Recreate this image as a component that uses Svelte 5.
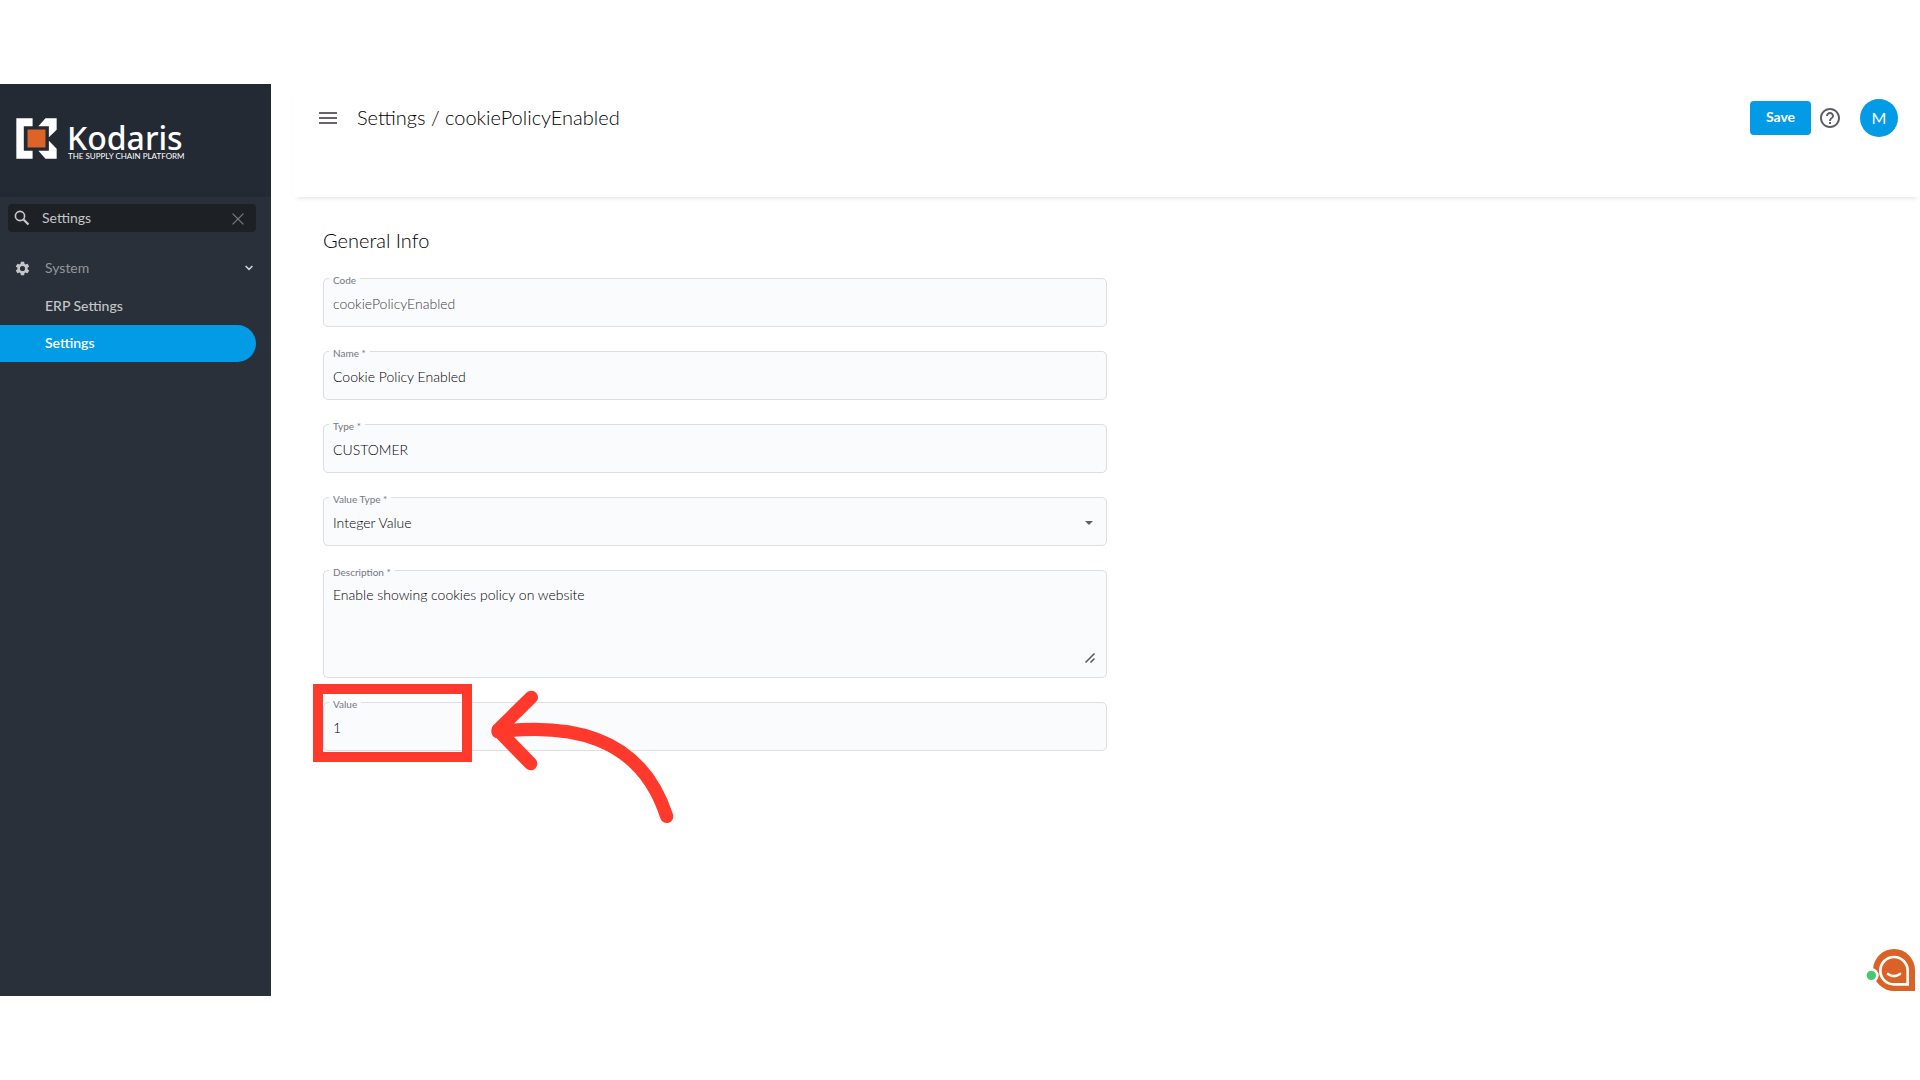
<script lang="ts">
  let search = $state('Settings');
  let menuOpen = $state(true);

  let setting = $state({
    code: 'cookiePolicyEnabled',
    name: 'Cookie Policy Enabled',
    type: 'CUSTOMER',
    valueType: 'Integer Value',
    description: 'Enable showing cookies policy on website',
    value: '1'
  });

  const valueTypes = ['Integer Value', 'String Value', 'Boolean Value'];
</script>

<div class="app">
  <aside class="sidebar">
    <a class="brand" href="#home">
      <svg class="mark" viewBox="50 144 121 121" aria-hidden="true">
        <path fill="#fff" d="M51 145h48v23H73v73h26v23H51zM137 145h33v34l-23 22v-33h-31zM116 241h31v-30l23 24v29h-33z" />
        <path fill="#dc6428" d="M84 178h53v53H84z" />
      </svg>
      <span class="brand-text">
        <span class="brand-name">Kodaris</span>
        <span class="tagline">THE SUPPLY CHAIN PLATFORM</span>
      </span>
    </a>

    <div class="search">
      <svg width="16" height="16" viewBox="0 0 16 16" fill="none" stroke="#c8c9cb" aria-hidden="true">
        <circle cx="6" cy="6" r="4.6" stroke-width="1.6" />
        <path d="M9.5 9.5l5 5" stroke-width="2.2" />
      </svg>
      <input type="text" aria-label="Search menu" bind:value={search} />
      <button class="clear" aria-label="Clear" onclick={() => (search = '')}>
        <svg width="12" height="12" viewBox="0 0 12 12" stroke="#777b81" stroke-width="1.3" aria-hidden="true">
          <path d="M.6.6l10.8 10.8M11.4.6L.6 11.4" />
        </svg>
      </button>
    </div>

    <nav>
      <button class="group" onclick={() => (menuOpen = !menuOpen)}>
        <svg width="17" height="17" viewBox="0 0 24 24" fill="#c4c6c8" aria-hidden="true">
          <path d="M19.14 12.94c.04-.3.06-.61.06-.94s-.02-.64-.07-.94l2.03-1.58a.49.49 0 0 0 .12-.61l-1.92-3.32a.49.49 0 0 0-.59-.22l-2.39.96a7 7 0 0 0-1.62-.94l-.36-2.54a.48.48 0 0 0-.48-.41h-3.84a.48.48 0 0 0-.47.41l-.36 2.54a7.4 7.4 0 0 0-1.62.94l-2.39-.96a.48.48 0 0 0-.59.22L2.74 8.87a.48.48 0 0 0 .12.61l2.03 1.58c-.05.3-.09.63-.09.94s.02.64.07.94l-2.03 1.58a.49.49 0 0 0-.12.61l1.92 3.32c.12.22.37.29.59.22l2.39-.96c.5.38 1.03.7 1.62.94l.36 2.54c.05.24.24.41.48.41h3.84c.24 0 .44-.17.47-.41l.36-2.54a7 7 0 0 0 1.62-.94l2.39.96c.22.08.47 0 .59-.22l1.92-3.32a.48.48 0 0 0-.12-.61zM12 15.6a3.6 3.6 0 1 1 0-7.2 3.6 3.6 0 0 1 0 7.2z" />
        </svg>
        <span>System</span>
        <svg class="chevron" width="8" height="6" viewBox="0 0 8 6" fill="none" stroke="#d4d5d7" stroke-width="1.5" aria-hidden="true">
          <path d="M.6 1L4 4.4 7.4 1" />
        </svg>
      </button>
      {#if menuOpen}
        <a class="item" href="#erp-settings">ERP Settings</a>
        <a class="item active" href="#settings">Settings</a>
      {/if}
    </nav>
  </aside>

  <main>
    <header>
      <button class="icon-button" aria-label="Toggle menu">
        <svg width="18" height="12" viewBox="0 0 18 12" fill="#67656b" aria-hidden="true">
          <path d="M0 0h18v2H0zM0 5h18v2H0zM0 10h18v2H0z" />
        </svg>
      </button>
      <h1>Settings / cookiePolicyEnabled</h1>
      <button class="save">Save</button>
      <button class="icon-button help" aria-label="Help">
        <svg width="20" height="20" viewBox="2 2 20 20" fill="#5f5d63" aria-hidden="true">
          <path d="M11 18h2v-2h-2v2zm1-16C6.48 2 2 6.48 2 12s4.48 10 10 10 10-4.48 10-10S17.52 2 12 2zm0 18c-4.41 0-8-3.59-8-8s3.59-8 8-8 8 3.59 8 8-3.59 8-8 8zm0-14c-2.21 0-4 1.79-4 4h2c0-1.1.9-2 2-2s2 .9 2 2c0 2-3 1.75-3 5h2c0-2.25 3-2.5 3-5 0-2.21-1.79-4-4-4z" />
        </svg>
      </button>
      <button class="avatar">M</button>
    </header>

    <form>
      <h2>General Info</h2>
      <div class="field">
        <label for="code">Code</label>
        <input id="code" type="text" value={setting.code} disabled />
      </div>
      <div class="field">
        <label for="name">Name *</label>
        <input id="name" type="text" bind:value={setting.name} />
      </div>
      <div class="field">
        <label for="type">Type *</label>
        <input id="type" type="text" bind:value={setting.type} />
      </div>
      <div class="field">
        <label for="value-type">Value Type *</label>
        <select id="value-type" bind:value={setting.valueType}>
          {#each valueTypes as option}
            <option>{option}</option>
          {/each}
        </select>
        <svg class="caret" width="8" height="4" viewBox="0 0 8 4" fill="#5f6065" aria-hidden="true">
          <path d="M0 0h8L4 4z" />
        </svg>
      </div>
      <div class="field tall">
        <label for="description">Description *</label>
        <textarea id="description" bind:value={setting.description}></textarea>
        <svg class="grip" width="10" height="10" viewBox="0 0 10 10" fill="none" stroke="#55555a" stroke-width="1.5" aria-hidden="true">
          <path d="M.5 9.5l9-9M5.5 9.5l4-4" />
        </svg>
      </div>
      <div class="field">
        <label for="value">Value</label>
        <input id="value" type="text" bind:value={setting.value} />
        <div class="highlight"></div>
        <svg class="arrow" width="185" height="135" viewBox="570 60 555 405" fill="none" stroke="#ff392b" stroke-width="40" stroke-linecap="round" stroke-linejoin="round" aria-hidden="true">
          <path d="M694 82L594 180l98 101M594 185C800 160 1020 190 1100 439" />
        </svg>
      </div>
    </form>
  </main>

  <button class="chat" aria-label="Open chat">
    <svg width="50" height="44" viewBox="138 84 150 132" aria-hidden="true">
      <path fill="#db6227" d="M222 87a63 63 0 0 1 63 63v63h-63a63 63 0 0 1 0-126z" />
      <path fill="none" stroke="#fff" stroke-width="8" d="M222 111a41 41 0 0 1 41 41v41h-41a41 41 0 0 1 0-82z" />
      <path fill="none" stroke="#fff" stroke-width="8" stroke-linecap="round" d="M204 162q18 13 36 0" />
      <circle cx="154" cy="166" r="22" fill="#fff" />
      <circle cx="154" cy="166" r="14" fill="#44c96f" />
    </svg>
  </button>
</div>

<style>
  :global(body) {
    background: #fff;
    font-family: Lato, 'Open Sans', sans-serif;
    color: #000;
  }

  .app {
    position: relative;
    display: flex;
    min-height: calc(100vh - 168px);
    margin: 84px 0;
  }

  button {
    padding: 0;
    border: 0;
    background: none;
    font: inherit;
    cursor: pointer;
  }

  svg {
    display: block;
    flex: none;
  }

  a {
    text-decoration: none;
  }

  .sidebar {
    flex: 0 0 271px;
    background: #2a303a;
  }

  .brand {
    display: flex;
    gap: 10px;
    box-sizing: border-box;
    height: 113px;
    padding: 34px 16px 0;
    background: #242a33;
    color: #fff;
    font-family: 'Noto Sans', sans-serif;
  }

  .mark {
    width: 41px;
    height: 41px;
  }

  .brand-text {
    display: flex;
    flex-direction: column;
  }

  .brand-name {
    height: 34px;
    font-size: 32px;
    font-weight: 500;
    line-height: 40px;
  }

  .tagline {
    padding-left: 1px;
    font-family: Lato, sans-serif;
    font-size: 8px;
    line-height: 8px;
    white-space: nowrap;
  }

  .search {
    display: flex;
    align-items: center;
    box-sizing: border-box;
    height: 28px;
    margin: 7px 15px 0 8px;
    padding: 0 12px 0 6px;
    border-radius: 4px;
    background: #1d2126;
  }

  .search input {
    flex: 1;
    min-width: 0;
    padding: 0 0 1px 12px;
    border: 0;
    outline: 0;
    background: none;
    color: #c4c5c7;
    font: 14px Lato, sans-serif;
  }

  .clear {
    padding-top: 2px;
  }

  nav {
    display: flex;
    flex-direction: column;
    padding-top: 17px;
  }

  .group {
    display: flex;
    align-items: center;
    gap: 14px;
    height: 38px;
    padding: 0 18px 0 14px;
    color: #93969b;
    font-size: 14px;
  }

  .group span {
    padding-bottom: 2px;
  }

  .chevron {
    margin-left: auto;
  }

  .item {
    height: 37px;
    margin-right: 15px;
    padding-left: 45px;
    border-radius: 0 19px 19px 0;
    color: #c4c5c7;
    font-size: 14px;
    font-weight: 500;
    line-height: 36px;
  }

  .item.active {
    background: #039be5;
    color: #fff;
    font-weight: 600;
  }

  .item:first-of-type {
    margin-top: 1px;
  }

  main {
    flex: 1;
    min-width: 0;
    padding-left: 23px;
  }

  header {
    display: flex;
    align-items: center;
    box-sizing: border-box;
    height: 113px;
    padding: 0 22px 46px 25px;
    box-shadow: 0 4px 5px -3px rgba(0, 0, 0, 0.12);
  }

  h1,
  h2 {
    margin: 0;
    padding-bottom: 2px;
    font-size: 20px;
    font-weight: 300;
    line-height: 24px;
  }

  h1 {
    padding-left: 20px;
    margin-right: auto;
  }

  .save {
    width: 61px;
    height: 34px;
    padding-bottom: 2px;
    border-radius: 4px;
    background: #039be5;
    color: #fff;
    font-size: 14px;
    font-weight: 700;
  }

  .help {
    margin: 0 20px 0 9px;
  }

  .avatar {
    width: 38px;
    height: 38px;
    border-radius: 50%;
    background: #039be5;
    color: #fff;
    font-size: 16px;
  }

  form {
    display: flex;
    flex-direction: column;
    gap: 24px;
    max-width: 784px;
    padding: 31px 29px 0;
  }

  .field {
    position: relative;
    box-sizing: border-box;
    height: 49px;
    border: 1px solid #dddee0;
    border-radius: 5px;
    background: #fafbfd;
  }

  .tall {
    height: 108px;
  }

  label {
    position: absolute;
    top: -5px;
    left: 5px;
    padding: 0 4px;
    background: linear-gradient(#fff 4px, #fafbfd 4px);
    color: #77787d;
    font-size: 10px;
    line-height: 12px;
  }

  .field input,
  .field select,
  .field textarea {
    display: block;
    box-sizing: border-box;
    width: 100%;
    height: 100%;
    padding: 2px 9px 0;
    border: 0;
    outline: 0;
    background: none;
    appearance: none;
    color: #000;
    font: 300 14px Lato, sans-serif;
  }

  .field textarea {
    padding-top: 15px;
    resize: none;
  }

  .field input:disabled {
    color: #3c3d41;
  }

  .caret {
    position: absolute;
    top: 23px;
    right: 13px;
  }

  .grip {
    position: absolute;
    right: 11px;
    bottom: 14px;
  }

  .highlight {
    position: absolute;
    top: -19px;
    left: -11px;
    width: 139px;
    height: 58px;
    border: 10px solid #ff392b;
    pointer-events: none;
  }

  .arrow {
    position: absolute;
    top: -13px;
    left: 166px;
    pointer-events: none;
  }

  .chat {
    position: absolute;
    right: 4px;
    bottom: 4px;
  }
</style>
